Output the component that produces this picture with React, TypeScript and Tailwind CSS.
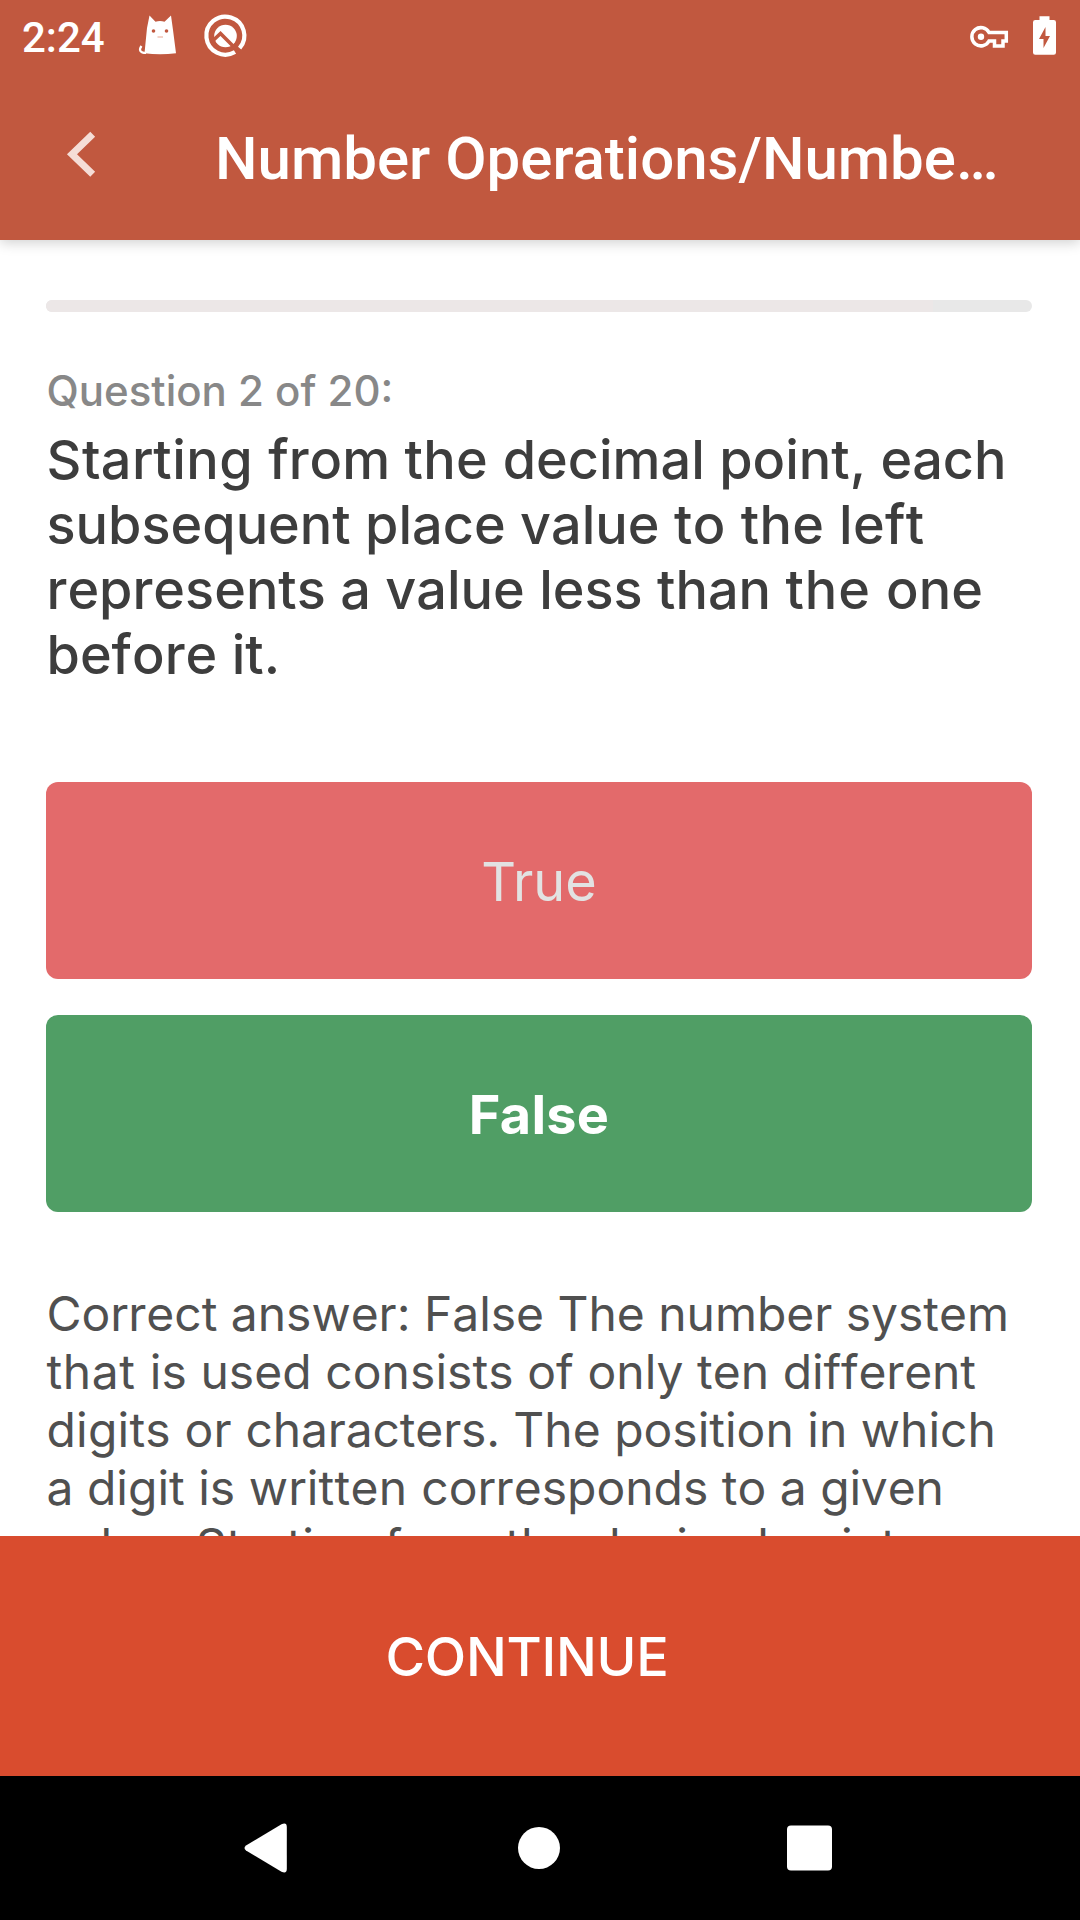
export default function App() {
  return (
    <div className="flex h-[1920px] w-[1080px] flex-col overflow-hidden bg-white font-['Inter',sans-serif]">
      <header className="z-10 h-[240px] shrink-0 bg-[#c1583f] text-white shadow-[0_3px_12px_rgba(0,0,0,0.18)]">
        <div className="flex h-[72px] items-start pl-[22px] font-['Roboto',sans-serif]">
          <span className="w-[114px] pt-[2px] text-[42px] font-medium leading-[72px]">2:24</span>
          <svg className="h-[60px] w-[116px]" viewBox="136 0 116 60" fill="none">
            <path d="M149.5 15.5L155.500 21.7Q160 20.5 164.500 21.7L171 15.5L173 30L176 53.300Q160 55.3 144.500 53.300L147 28Z" fill="#fff" />
            <path d="M146 53C140 53 138.500 50 141.500 46" stroke="#fff" strokeWidth="2.200" />
            <circle cx="153.500" cy="31" r="1.800" fill="#c1583f" />
            <circle cx="166.500" cy="31" r="1.800" fill="#c1583f" />
            <path d="M157.500 37h5.500" stroke="#f0c8bc" strokeWidth="1.600" />
            <circle cx="225.500" cy="36" r="11.300" fill="#fff" />
            <path d="M212 41.500l8.500-8L238 51" stroke="#c1583f" strokeWidth="3.600" />
            <path d="M235 52A19 19 0 1 1 239.600 48.200" stroke="#fff" strokeWidth="4.200" />
          </svg>
          <svg className="ml-auto h-[60px] w-[120px]" viewBox="960 0 120 60" fill="none">
            <path d="M989 32.500h17.300v8.500h-3.300v5h-8.500v-5h-5.500a9.100 9.100 0 1 1 0-8.500z" stroke="#fff" strokeWidth="3.500" />
            <circle cx="981" cy="36.700" r="3.200" fill="#fff" />
            <path d="M1039.500 20v-3.800h10V20h4.200q2.300 0 2.300 2.300V52.500q0 2.300-2.300 2.300h-18.400q-2.300 0-2.300-2.300V22.300q0-2.300 2.300-2.300z" fill="#fff" />
            <path d="M1045.500 27v9h4.500l-6.500 12v-9h-4.500z" fill="#c1583f" />
          </svg>
        </div>
        <div className="flex h-[168px] pt-[39px]">
          <svg className="ml-[66px] mt-[20px] h-[46px] w-[30px]" viewBox="66 131 30 46" fill="none" stroke="#f5ddd6" strokeWidth="7">
            <path d="M92.700 134.200L72 154.200l20.700 20" />
          </svg>
          <h1 className="ml-[119px] whitespace-nowrap font-['Roboto',sans-serif] text-[60px] font-medium leading-[96px]">Number Operations/Numbe…</h1>
        </div>
      </header>
      <main className="min-h-0 flex-1 overflow-hidden px-[46px] pt-[60px]">
        <div className="h-[12px] w-[986px] overflow-hidden rounded-[6px] bg-[#e8e8e8]">
          <div className="h-full w-[887px] bg-[#ece7e7]" />
        </div>
        <p className="mt-[50px] pl-[0.5px] text-[42px] font-medium leading-[58px] text-[#888]">Question 2 of 20:</p>
        <p className="mt-[7px] whitespace-nowrap pl-[0.5px] text-[54px] font-medium leading-[65px] text-[#3d3d3d] [font-kerning:none]">
          <span className="tracking-[0.5px]">Starting </span>from <span className="tracking-[0.3px]">the </span>decimal point, each<br />
          subsequent place value <span className="tracking-[0.5px]">to </span><span className="tracking-[0.3px]">the left</span><br />
          represents a value less than <span className="tracking-[0.9px]">the </span>one<br />
          before it.
        </p>
        <button className="mt-[95px] block h-[197px] w-[986px] rounded-[12px] bg-[#e36a6b] pt-[2px] text-[54px] text-[#e2e2e2]">True</button>
        <button className="mt-[36px] block h-[197px] w-[986px] rounded-[12px] bg-[#509e65] pt-[2px] text-[54px] font-bold tracking-[0.3px] text-white">False</button>
        <p className="mt-[73px] whitespace-nowrap pl-[0.5px] text-[48px] leading-[58px] text-[#505050] [font-kerning:none]">
          <span className="tracking-[-0.03px]">Correct answer: False The number system</span><br />
          <span className="tracking-[0.6px]">that </span><span className="tracking-[0.06px]">is used consists of only ten </span><span className="tracking-[-0.2px]">different</span><br />
          <span className="tracking-[0.2px]">digits or </span><span className="tracking-[-0.15px]">characters. </span>The position in which<br />
          a digit is <span className="tracking-[0.3px]">written </span>corresponds to a <span className="tracking-[-0.2px]">given</span><br />
          value. <span className="tracking-[-0.15px]">Starting </span><span className="tracking-[0.1px]">from the decimal point,</span>
        </p>
      </main>
      <button className="h-[240px] shrink-0 bg-[#d94c2e] pr-[26px] text-[54px] font-medium tracking-[-0.25px] text-white">CONTINUE</button>
      <nav className="h-[144px] shrink-0 bg-black">
        <svg className="h-[144px] w-[1080px]" viewBox="0 0 1080 144" fill="#fff">
          <path d="M246 69.500L281.500 48.300Q286.800 46 286.800 51V93Q286.800 98 281.500 95.700L246 74.500Q243 72 246 69.500z" />
          <circle cx="539" cy="72" r="21" />
          <rect x="787" y="49.500" width="45" height="45" rx="4" />
        </svg>
      </nav>
    </div>
  );
}
